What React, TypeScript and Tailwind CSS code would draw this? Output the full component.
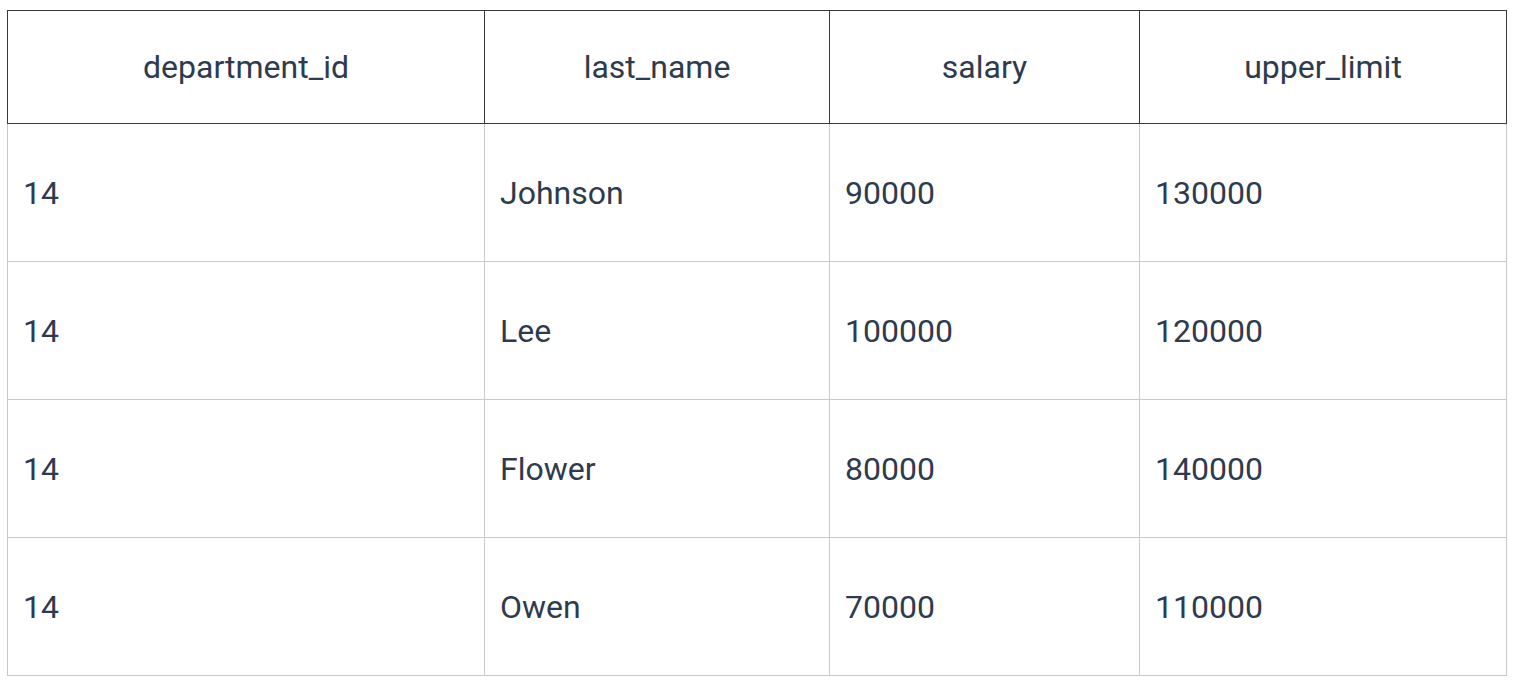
import React from 'react';

const headers = ['department_id', 'last_name', 'salary', 'upper_limit'];

const rows = [
  ['14', 'Johnson', '90000', '130000'],
  ['14', 'Lee', '100000', '120000'],
  ['14', 'Flower', '80000', '140000'],
  ['14', 'Owen', '70000', '110000'],
];

const widths = ['w-[477px]', 'w-[345px]', 'w-[310px]', 'w-[367px]'];

const App = () => {
  return (
    <div className="min-h-screen bg-white pt-[10px] pl-[7px] font-['Roboto',sans-serif] text-[#2e3b4e]">
      <table className="border-collapse table-fixed w-[1499px]">
        <thead>
          <tr className="h-[113px]">
            {headers.map((h, i) => (
              <th
                key={h}
                className={`${widths[i]} border border-[#3a3a3a] text-center text-[32px] font-normal`}
              >
                {h}
              </th>
            ))}
          </tr>
        </thead>
        <tbody>
          {rows.map((row, r) => (
            <tr key={r} className="h-[138px]">
              {row.map((cell, c) => (
                <td
                  key={c}
                  className="border border-[#c9c9c9] pl-[15px] pr-4 text-left text-[32px]"
                >
                  {cell}
                </td>
              ))}
            </tr>
          ))}
        </tbody>
      </table>
    </div>
  );
};

export default App;
